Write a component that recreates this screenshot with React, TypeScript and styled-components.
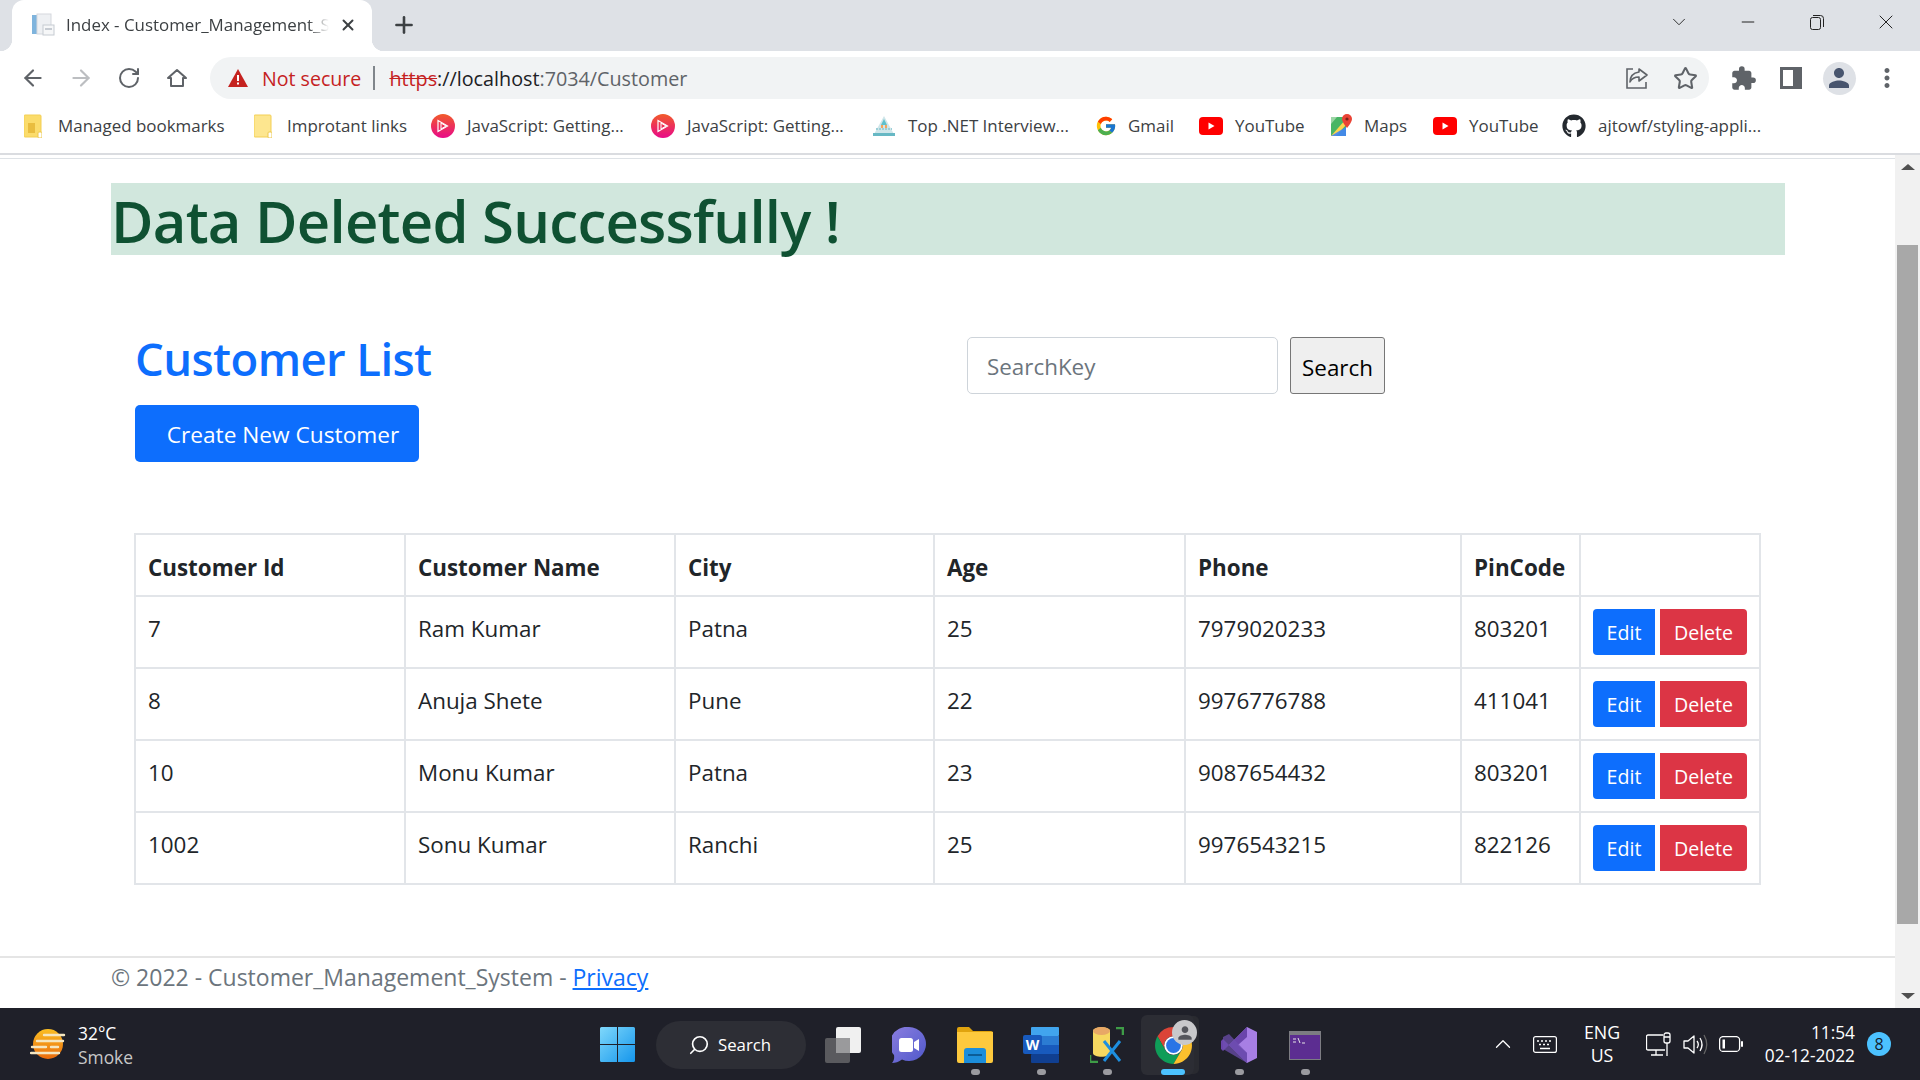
import React from "react";
import styled, { createGlobalStyle } from "styled-components";
import { ArrowLeft, ArrowRight, RotateCw, Star, X, Plus, ChevronDown, Minus, ChevronUp, Search as SearchIcon } from "lucide-react";
import { MdExtension, MdMoreVert, MdPerson } from "react-icons/md";
import { FaGithub } from "react-icons/fa";
import { FcGoogle } from "react-icons/fc";

const FONT = `"Open Sans", "Noto Sans", sans-serif`;

const Global = createGlobalStyle`
  html, body { margin: 0; padding: 0; background: #fff; overflow: hidden; }
  * { box-sizing: border-box; }
  body { font-family: ${FONT}; }
`;

const Screen = styled.div`
  width: 1920px; height: 1080px; display: flex; flex-direction: column; overflow: hidden; background: #fff;
`;

/* ---------- tab strip ---------- */
const TabStrip = styled.div`
  height: 51px; flex: none; background: #dee1e6; display: flex; align-items: flex-end; padding-left: 12px; position: relative;
`;
const Tab = styled.div`
  width: 360px; height: 51px; background: #fff; border-radius: 12px 12px 0 0; display: flex; align-items: center;
  padding: 0 0 1px 19px; position: relative;
  &::before, &::after { content: ""; position: absolute; bottom: 0; width: 12px; height: 12px; }
  &::before { left: -12px; background: radial-gradient(circle at 0 0, #dee1e6 12px, #fff 12.5px); }
  &::after { right: -12px; background: radial-gradient(circle at 100% 0, #dee1e6 12px, #fff 12.5px); }
`;
const TabTitle = styled.span`
  margin-left: 11px; width: 263px; font-size: 16.9px; line-height: 24px; color: #3c4043; white-space: nowrap; overflow: hidden;
  mask-image: linear-gradient(90deg, #000 92%, transparent);
`;
const TabClose = styled.span`
  margin-left: 10px; display: flex; color: #3c4043;
`;
const NewTab = styled.span`
  display: flex; margin: 0 0 2px 19px; align-self: center; color: #3c4043;
`;
const WinControls = styled.div`
  margin-left: auto; align-self: flex-start; height: 44px; display: flex; color: #222; 
`;
const WinBtn = styled.span<{ $w: number }>`
  width: ${p => p.$w}px; height: 44px; display: flex; align-items: center; justify-content: center;
`;

/* ---------- toolbar ---------- */
const Toolbar = styled.div`
  height: 48px; flex: none; background: #fff; display: flex; align-items: flex-start; padding: 6px 0 0 9px; position: relative;
`;
const NavBtn = styled.span<{ $c?: string }>`
  width: 48px; height: 42px; flex: none; display: flex; align-items: center; justify-content: center; color: ${p => p.$c ?? "#5f6368"};
`;
const Omnibox = styled.div`
  width: 1499px; height: 42px; flex: none; margin: 0 10px 0 9px; border-radius: 21px; background: #f1f3f4; display: flex; align-items: center; padding-left: 18px;
`;
const NotSecure = styled.span`
  margin: 2px 0 0 14px; font-size: 19.6px; line-height: 26px; color: #c5221f; white-space: nowrap;
`;
const OmniSep = styled.span`
  width: 2px; height: 24px; background: #80868b; margin: 0 14px 0 12px;
`;
const Url = styled.span`
  margin-top: 2px; font-size: 19.75px; line-height: 26px; color: #5f6368; white-space: nowrap; flex: 1;
`;
const UrlScheme = styled.span`
  color: #c5221f; text-decoration: line-through;
`;
const UrlHost = styled.span`
  color: #202124;
`;
const OmniIcon = styled.span`
  width: 48px; display: flex; justify-content: center; flex: none; color: #5f6368;
`;
const Avatar = styled.span`
  width: 33px; height: 33px; border-radius: 50%; background: #dee1e6; display: flex; align-items: center; justify-content: center; color: #48556e;
`;

/* ---------- bookmarks ---------- */
const Bookmarks = styled.div`
  height: 54px; flex: none; background: #fff; display: flex; align-items: center; padding-left: 24px; border-bottom: 0;
`;
const Bookmark = styled.div<{ $w: number; $gap: number }>`
  width: ${p => p.$w}px; flex: none; height: 30px; display: flex; align-items: center; white-space: nowrap;
  & > span { margin-left: ${p => p.$gap}px; }
`;
const BookmarkIcon = styled.div`
  width: 24px; height: 24px; display: flex; align-items: center; justify-content: flex-start; flex: none;
`;
const BookmarkText = styled.span`
  font-size: 16.95px; line-height: 24px; color: #3c4043;
`;
const ChromeEdge = styled.div`
  height: 2px; flex: none; background: #dadce0;
`;

/* ---------- page ---------- */
const Viewport = styled.div`
  flex: 1; min-height: 0; display: flex;
`;
const Page = styled.div`
  flex: 1; min-width: 0; display: flex; flex-direction: column; background: #fff;
`;
const NavStub = styled.div`
  height: 4px; flex: none; border-bottom: 1px solid #dee2e6;
`;
const Alert = styled.div`
  margin: 24px 0 0 111px; width: 1674px; height: 72px; background: #d1e7dd; color: #0f5132; font-size: 58px; line-height: 76px; font-weight: 600; letter-spacing: -0.75px; white-space: nowrap;
`;
const Main = styled.div`
  margin-left: 135px; width: 1626px; padding-top: 74px;
`;
const HeadRow = styled.div`
  display: flex; align-items: flex-start; height: 204px;
`;
const TitleCol = styled.div`
  width: 832px; flex: none;
`;
const Title = styled.h2`
  margin: 0; font-size: 45.5px; line-height: 58px; font-weight: 600; letter-spacing: -0.6px; color: #0d6efd; white-space: nowrap;
`;
const CreateBtn = styled.button`
  margin-top: 18px; width: 284px; height: 57px; background: #0d6efd; color: #fff; border: 0; border-radius: 5px; font-family: ${FONT}; font-size: 22.700px; padding: 2px 0 0 12px; display: block;
`;
const SearchForm = styled.form`
  display: flex; gap: 12px; margin: 8px 0 0;
`;
const SearchInput = styled.input`
  width: 311px; height: 57px; border: 1px solid #ced4da; border-radius: 5px; padding: 2px 19px 0; font-family: ${FONT}; font-size: 22.4px; color: #212529; outline: 0;
  &::placeholder { color: #6c757d; opacity: 1; }
`;
const SearchBtn = styled.button`
  width: 95px; height: 57px; border: 1px solid #767676; border-radius: 3px; background: #efefef; color: #000; font-family: ${FONT}; font-size: 22.4px; padding: 3px 0 0;
`;
const Table = styled.table`
  margin: 0 0 0 -1px; width: 1626px; table-layout: fixed; border-collapse: collapse; color: #212529; font-size: 22.4px;
  th, td { border: 2px solid #e2e5e9; padding: 14px 12px 10px; line-height: 36px; text-align: left; vertical-align: top; }
  th { font-weight: 700; padding-top: 15px; padding-bottom: 9px; }
  thead tr { height: 62px; }
  tbody tr { height: 72px; }
`;
const ActionCell = styled.td`
  && { padding: 12px 0 0 12px; }
`;
const Actions = styled.div`
  display: flex; gap: 5px;
`;
const RowBtn = styled.button<{ $danger?: boolean }>`
  height: 46px; width: ${p => (p.$danger ? 87 : 62)}px; border: 0; color: #fff; font-family: ${FONT}; font-size: 19.6px; padding: 0;
  background: ${p => (p.$danger ? "#dc3545" : "#0d6efd")};
  border-radius: ${p => (p.$danger ? "0 4px 4px 0" : "4px 0 0 4px")};
`;
const Footer = styled.footer`
  margin-top: 71px; border-top: 2px solid #e5e5e5; padding-left: 111px; height: 51px; color: #6c757d; font-size: 23px; line-height: 36px; padding-top: 1px; white-space: nowrap;
`;
const FooterLink = styled.a`
  color: #0d6efd; text-decoration: underline;
`;

const Scrollbar = styled.div`
  width: 25px; flex: none; background: #f1f1f1; display: flex; flex-direction: column; align-items: center; padding-top: 9px;
`;
const ScrollThumb = styled.div`
  width: 21px; height: 679px; margin-top: 75px; background: #a8a8a8; flex: none;
`;
const ArrowUp = styled.div`
  width: 0; height: 0; flex: none; border: 7px solid transparent; border-top: 0; border-bottom: 6px solid #505050; 
`;
const ArrowDown = styled.div`
  width: 0; height: 0; flex: none; margin-top: 69px; border: 7px solid transparent; border-bottom: 0; border-top: 6px solid #505050;
`;

/* ---------- taskbar ---------- */
const Taskbar = styled.div`
  height: 72px; flex: none; background: #1f2029; display: flex; align-items: stretch; color: #fff;
`;
const Weather = styled.div`
  width: 600px; flex: none; display: flex; align-items: center; padding-left: 30px;
`;
const WeatherText = styled.div`
  margin-left: 12px; font-size: 17.400px; line-height: 24px; margin-top: 1px;
`;
const WeatherSub = styled.div`
  color: #c8c8c8;
`;
const Center = styled.div`
  display: flex; align-items: center;
`;
const SearchPill = styled.div`
  width: 150px; height: 48px; margin: 1px 4px 0 21px; border-radius: 24px; background: #2d2e35; display: flex; align-items: center; padding-left: 32px; gap: 8px; font-size: 16.8px;
`;
const AppSlot = styled.div<{ $active?: boolean; $running?: boolean }>`
  width: 66px; height: 72px; position: relative; display: flex; align-items: center; justify-content: center; padding-top: 2px;
  ${p => p.$active ? `&::before { content: ""; position: absolute; left: 1px; top: 7px; width: 53px; height: 60px; border-radius: 6px; background: #2c2d34; box-shadow: 6px 0 0 -1px #292a30; }` : ""}
  &::after {
    content: ""; position: absolute; bottom: 5px; left: 50%; height: 6px; border-radius: 3px;
    width: ${p => (p.$active ? 24 : 9)}px; margin-left: ${p => (p.$active ? -12 : -4)}px;
    background: ${p => (p.$active ? "#4cc2ff" : p.$running ? "#9b9ba0" : "transparent")};
  }
  & > svg { position: relative; }
`;
const ProfileBadge = styled.span`
  position: absolute; top: 12px; left: 32px; width: 25px; height: 25px; border-radius: 50%; background: #c9c9cb; color: #55565c; display: flex; align-items: center; justify-content: center;
`;
const Tray = styled.div`
  margin-left: auto; display: flex; align-items: center; padding-right: 29px;
`;
const TraySlot = styled.span<{ $w: number }>`
  width: ${p => p.$w}px; display: flex; justify-content: center; flex: none;
`;
const Lang = styled.div`
  width: 76px; text-align: center; font-size: 17.800px; line-height: 23px; 
`;
const Clock = styled.div`
  width: 106px; text-align: right; font-size: 17.300px; line-height: 23px; white-space: nowrap;
`;
const Badge = styled.span`
  width: 24px; height: 24px; margin-left: 12px; border-radius: 50%; background: #4cc2ff; color: #14202c; font-size: 16px; display: flex; align-items: center; justify-content: center;
`;

/* ---------- drawings ---------- */
const Favicon = () => (
  <svg width="24" height="24" viewBox="0 0 24 24">
    <rect x="1" y="2" width="5" height="19" fill="#7fb4dd" />
    <rect x="6" y="1" width="14" height="20" fill="#eef0f3" stroke="#d5d8dd" />
    <rect x="12" y="12" width="11" height="10" fill="#f6f7f8" stroke="#c6cbd2" />
    <rect x="14" y="15" width="7" height="2" fill="#c6cbd2" />
  </svg>
);
const Warning = () => (
  <svg width="20" height="18" viewBox="0 0 20 18"><path d="M10 0 20 18H0Z" fill="#c5221f" /><rect x="9" y="6" width="2" height="6" fill="#fff" /><rect x="9" y="13.5" width="2" height="2" fill="#fff" /></svg>
);
const Home = () => (
  <svg width="24" height="24" viewBox="0 0 24 24" fill="none" stroke="#5f6368" strokeWidth="2"><path d="M3 12 12 4l9 8h-3v8H6v-8Z" strokeLinejoin="round" /></svg>
);
const Share = () => (
  <svg width="24" height="24" viewBox="0 0 24 24" fill="none" stroke="#5f6368" strokeWidth="1.6"><path d="M8 3H2v19h19v-6" /><path d="M14 3l8 6-8 6v-4c-4 0-7 1-9 5 0-6 3-9 9-10Z" strokeLinejoin="round" /></svg>
);
const Panel = () => (
  <svg width="22" height="22" viewBox="0 0 22 22"><path fillRule="evenodd" d="M0 0h22v22H0Zm3 3v16h10V3Z" fill="#5f6368" /></svg>
);
const RestoreIcon = () => (
  <svg width="16" height="16" viewBox="0 0 16 16" fill="none" stroke="#222" strokeWidth="1"><rect x="1.5" y="3.5" width="10" height="12" rx="2" /><path d="M4 1.5h7.5a3 3 0 0 1 3 3V13" /></svg>
);
const FolderBm = ({ managed }: { managed?: boolean }) => (
  <svg width="18" height="24" viewBox="0 0 18 24">
    <path d="M0 2a1 1 0 0 1 1-1h15a1 1 0 0 1 1 1v21H1a1 1 0 0 1-1-1Z" fill={managed ? "#fbdc6b" : "#fde68f"} stroke="#f3cf55" />
    {managed && <rect x="4" y="9" width="7" height="10" fill="#e9bd3f" />}
    <rect x="14" y="18" width="4" height="6" rx="1" fill="#fff" stroke="#edc84c" />
  </svg>
);
const Pluralsight = () => (
  <svg width="24" height="24" viewBox="0 0 24 24">
    <defs><linearGradient id="ps" x1="0.5" y1="0" x2="0.5" y2="1"><stop offset="0" stopColor="#f15b2a" /><stop offset="1" stopColor="#e80a89" /></linearGradient></defs>
    <circle cx="12" cy="12" r="12" fill="url(#ps)" />
    <path d="M7 6.5v11L16.5 12Z" fill="none" stroke="#fff" strokeWidth="1.2" /><path d="M10 9v6l5-3Z" fill="none" stroke="#fff" strokeWidth="1" />
  </svg>
);
const NetIcon = () => (
  <svg width="24" height="24" viewBox="0 0 24 24">
    <path d="M12 2 23 22H1Z" fill="#cfe6ea" />
    <path d="M12 5 15 11H9Z" fill="#5ec0cc" />
    <rect x="9" y="11" width="2" height="3" fill="#f2a55d" /><rect x="13" y="11" width="2" height="3" fill="#f2a55d" />
    <path d="M1 19h22v3H1Z" fill="#67b8c4" />
    <path d="M4 15h16" stroke="#9ccfd7" strokeWidth="2" strokeDasharray="2 1" />
  </svg>
);
const YouTube = () => (
  <svg width="24" height="18" viewBox="0 0 24 18"><rect width="24" height="18" rx="4" fill="#f00" /><path d="M9.5 5.5v7l6-3.5Z" fill="#fff" /></svg>
);
const Maps = () => (
  <svg width="22" height="24" viewBox="0 0 22 24">
    <path d="M1 3h15v19H1Z" fill="#48b564" />
    <path d="M1 22 16 5v6L6 22Z" fill="#fcd34d" />
    <path d="M1 22h15v-9Z" fill="#4285f4" opacity=".9" />
    <path d="M1 3h6L1 10Z" fill="#9cd5a5" />
    <path d="M17 0a5 5 0 0 1 5 5c0 3-5 9-5 9s-5-6-5-9a5 5 0 0 1 5-5Z" fill="#ea4335" />
    <circle cx="17" cy="5" r="1.6" fill="#7d2118" />
  </svg>
);
const WeatherIcon = () => (
  <svg width="36" height="30" viewBox="0 0 36 30">
    <defs><linearGradient id="sun" x1="0" y1="0" x2="0" y2="1"><stop offset="0" stopColor="#fbbf24" /><stop offset="1" stopColor="#ea6a0c" /></linearGradient></defs>
    <circle cx="18" cy="15" r="15" fill="url(#sun)" />
    <g stroke="#f5e6c0" strokeWidth="2.4" strokeLinecap="round">
      <path d="M14 6h20M7 12h26M2 18h14M21 18h7M1 24h28" />
    </g>
  </svg>
);
const Win11 = () => (
  <svg width="35" height="35" viewBox="0 0 35 35">
    <defs><linearGradient id="w1" x1="0" y1="0" x2="1" y2="1"><stop offset="0" stopColor="#7fd8fb" /><stop offset="1" stopColor="#1596ec" /></linearGradient></defs>
    <path d="M0 1.5A1.5 1.5 0 0 1 1.5 0H17v17H0ZM18 0h15.5A1.5 1.5 0 0 1 35 1.5V17H18ZM0 18h17v17H1.5A1.5 1.5 0 0 1 0 33.500ZM18 18h17v15.500A1.500 1.500 0 0 1 33.500 35H18Z" fill="url(#w1)" />
  </svg>
);
const CubeApp = () => (
  <svg width="36" height="36" viewBox="0 0 36 36">
    <rect x="0" y="11" width="25" height="25" rx="2" fill="#5a5a5e" />
    <rect x="11" y="0" width="25" height="26" rx="2" fill="#f0f0f0" />
    <rect x="11" y="11" width="14" height="15" fill="#9a9a9c" />
  </svg>
);
const Teams = () => (
  <svg width="34" height="36" viewBox="0 0 34 36">
    <defs><linearGradient id="tm" x1="0" y1="0" x2="1" y2="1"><stop offset="0" stopColor="#8b7ee0" /><stop offset="1" stopColor="#4f58ca" /></linearGradient></defs>
    <path d="M17 0a17 17 0 1 1-7 32.500C7 35 3 36 0 36c2-2 2.500-5 2-8A17 17 0 0 1 17 0Z" fill="url(#tm)" />
    <rect x="7" y="11" width="14" height="14" rx="2.500" fill="#fff" />
    <path d="M22 15l5-3v12l-5-3Z" fill="#fff" />
  </svg>
);
const FolderApp = () => (
  <svg width="36" height="36" viewBox="0 0 36 36">
    <path d="M0 2a2 2 0 0 1 2-2h10l4 4h18a2 2 0 0 1 2 2v6H0Z" fill="#e0a30e" />
    <path d="M0 5h36v29a2 2 0 0 1-2 2H2a2 2 0 0 1-2-2Z" fill="#fdc93d" />
    <path d="M7 36V24a3 3 0 0 1 3-3h16a3 3 0 0 1 3 3v12Z" fill="#1c8edb" />
    <rect x="11" y="27" width="14" height="2" fill="#0b5d98" />
  </svg>
);
const Word = () => (
  <svg width="36" height="36" viewBox="0 0 36 36">
    <rect x="8" y="0" width="28" height="9" rx="1" fill="#41a5ee" />
    <rect x="8" y="9" width="28" height="9" fill="#2b7cd3" />
    <rect x="8" y="18" width="28" height="9" fill="#185abd" />
    <rect x="8" y="27" width="28" height="9" rx="1" fill="#103f91" />
    <rect x="0" y="8" width="19" height="19" rx="2" fill="#185abd" />
    <text x="9.500" y="23" textAnchor="middle" fontSize="14" fontWeight="700" fill="#fff" fontFamily="Open Sans, sans-serif">W</text>
  </svg>
);
const DbTool = () => (
  <svg width="34" height="36" viewBox="0 0 34 36">
    <path d="M3 4c0-5 17-5 17 0v22c0 5-17 5-17 0Z" fill="#f6d860" />
    <ellipse cx="11.500" cy="4" rx="8.500" ry="4" fill="#e8a866" />
    <path d="M26 1h7v7M0 28v7h8" stroke="#3e9c47" strokeWidth="2.600" fill="none" />
    <path d="M14 34 30 14M30 34 14 14" stroke="#1d8fe0" strokeWidth="3" />
  </svg>
);
const ChromeLogo = () => (
  <svg width="37" height="37" viewBox="4 4 40 40">
    <path d="M24 4A20 20 0 0 0 6.700 14L15.300 29A10 10 0 0 1 24 14H41.300A20 20 0 0 0 24 4Z" fill="#db4437" />
    <path d="M6.700 14A20 20 0 0 0 24 44L32.700 29A10 10 0 0 1 15.300 29Z" fill="#0f9d58" />
    <path d="M41.300 14H24A10 10 0 0 1 32.700 29L24 44A20 20 0 0 0 41.300 14Z" fill="#fbc02d" />
    <circle cx="24" cy="24" r="10" fill="#fff" /><circle cx="24" cy="24" r="8" fill="#2a75e6" />
  </svg>
);
const VS = () => (
  <svg width="36" height="36" viewBox="0 0 36 36">
    <path d="M26 0 36 5v26l-10 5L8 18Z" fill="#a77fe4" />
    <path d="M26 0 8 18 2 12l-2 2v8l2 2 6-6 18 18V26l-9-8 9-8Z" fill="#6a45ab" />
    <path d="M2 10l6-3 18 19v10L2 22Z" fill="#6f50b2" opacity=".7" />
  </svg>
);
const Terminal = () => (
  <svg width="32" height="29" viewBox="0 0 32 29">
    <rect width="32" height="29" fill="#7c7c82" />
    <rect x="1" y="4" width="30" height="24" fill="#5c2d91" />
    <path d="M4 8h3M4 11h3M9 7l2 5M13 12h3" stroke="#e6e6e6" strokeWidth="1" fill="none" />
  </svg>
);
const Keyboard = () => (
  <svg width="24" height="17" viewBox="0 0 24 17" fill="none" stroke="#fff" strokeWidth="1.200"><rect x=".6" y=".6" width="22.800" height="15.800" rx="2" /><path d="M4 5h2M8 5h2M12 5h2M16 5h2M6 8.500h2M10 8.500h2M14 8.500h2M7 12.500h10" strokeWidth="1.400" /></svg>
);
const Monitor = () => (
  <svg width="25" height="25" viewBox="0 0 25 25" fill="none" stroke="#fff" strokeWidth="1.300"><path d="M17 3H2a1.500 1.500 0 0 0-1.500 1.500v12A1.500 1.500 0 0 0 2 18h17" /><path d="M5 23h12M10 18v5" /><rect x="18" y="1" width="6" height="10" rx="2" /><path d="M21 11v13M18 5h6" /></svg>
);
const Speaker = () => (
  <svg width="25" height="21" viewBox="0 0 25 21" fill="none" stroke="#fff" strokeWidth="1.300"><path d="M1 7h4l6-5v17l-6-5H1Z" strokeLinejoin="round" /><path d="M14 7c1.500 2 1.500 5 0 7M17 4c2.500 4 2.500 9 0 13" /><path d="M21 1c3.500 6 3.500 13 0 19" stroke="#666" /></svg>
);
const Battery = () => (
  <svg width="24" height="16" viewBox="0 0 24 16" fill="none" stroke="#fff" strokeWidth="1.300"><rect x=".6" y=".6" width="20" height="14.800" rx="3.500" /><rect x="3.500" y="3.500" width="2.500" height="9" fill="#fff" stroke="none" /><path d="M22 6h1.500v4H22" fill="#fff" /></svg>
);

/* ---------- data ---------- */
const bookmarks: { w: number; gap: number; icon: React.ReactNode; label: string }[] = [
  { w: 230, gap: 10, icon: <FolderBm managed />, label: "Managed bookmarks" },
  { w: 177, gap: 9, icon: <FolderBm />, label: "Improtant links" },
  { w: 220, gap: 12, icon: <Pluralsight />, label: "JavaScript: Getting..." },
  { w: 221, gap: 12, icon: <Pluralsight />, label: "JavaScript: Getting..." },
  { w: 223, gap: 12, icon: <NetIcon />, label: "Top .NET Interview..." },
  { w: 104, gap: 9, icon: <FcGoogle size={22} />, label: "Gmail" },
  { w: 131, gap: 12, icon: <YouTube />, label: "YouTube" },
  { w: 103, gap: 10, icon: <Maps />, label: "Maps" },
  { w: 129, gap: 12, icon: <YouTube />, label: "YouTube" },
  { w: 200, gap: 12, icon: <FaGithub size={24} color="#24292f" />, label: "ajtowf/styling-appli..." },
];
const customers = [
  ["7", "Ram Kumar", "Patna", "25", "7979020233", "803201"],
  ["8", "Anuja Shete", "Pune", "22", "9976776788", "411041"],
  ["10", "Monu Kumar", "Patna", "23", "9087654432", "803201"],
  ["1002", "Sonu Kumar", "Ranchi", "25", "9976543215", "822126"],
];
const columns = [
  { label: "Customer Id", w: 270 }, { label: "Customer Name", w: 270 }, { label: "City", w: 259 },
  { label: "Age", w: 251 }, { label: "Phone", w: 276 }, { label: "PinCode", w: 119 }, { label: "", w: 180 },
];
const apps: { icon: React.ReactNode; running?: boolean; active?: boolean; badge?: boolean }[] = [
  { icon: <CubeApp /> }, { icon: <Teams /> }, { icon: <FolderApp />, running: true }, { icon: <Word />, running: true },
  { icon: <DbTool />, running: true }, { icon: <ChromeLogo />, active: true, badge: true }, { icon: <VS />, running: true }, { icon: <Terminal />, running: true },
];

export default function App() {
  return (
    <Screen>
      <Global />
      <TabStrip>
        <Tab>
          <Favicon />
          <TabTitle>Index - Customer_Management_S</TabTitle>
          <TabClose><X size={18} strokeWidth={2.6} /></TabClose>
        </Tab>
        <NewTab><Plus size={26} strokeWidth={2.4} /></NewTab>
        <WinControls>
          <WinBtn $w={69}><ChevronDown size={22} strokeWidth={1} /></WinBtn>
          <WinBtn $w={69}><Minus size={20} strokeWidth={1.2} /></WinBtn>
          <WinBtn $w={69}><RestoreIcon /></WinBtn>
          <WinBtn $w={69}><X size={24} strokeWidth={1} /></WinBtn>
        </WinControls>
      </TabStrip>
      <Toolbar>
        <NavBtn><ArrowLeft size={26} strokeWidth={2} /></NavBtn>
        <NavBtn $c="#bcbec1"><ArrowRight size={26} strokeWidth={2} /></NavBtn>
        <NavBtn><RotateCw size={24} strokeWidth={2} /></NavBtn>
        <NavBtn><Home /></NavBtn>
        <Omnibox>
          <Warning />
          <NotSecure>Not secure</NotSecure>
          <OmniSep />
          <Url><UrlScheme>https</UrlScheme><UrlHost>://localhost</UrlHost>:7034/Customer</Url>
          <OmniIcon><Share /></OmniIcon>
          <OmniIcon><Star size={25} strokeWidth={2} /></OmniIcon>
        </Omnibox>
        <NavBtn><MdExtension size={27} /></NavBtn>
        <NavBtn><Panel /></NavBtn>
        <NavBtn><Avatar><MdPerson size={30} /></Avatar></NavBtn>
        <NavBtn><MdMoreVert size={30} /></NavBtn>
      </Toolbar>
      <Bookmarks>
        {bookmarks.map((b, i) => (
          <Bookmark key={i} $w={b.w} $gap={b.gap}>
            <BookmarkIcon>{b.icon}</BookmarkIcon>
            <BookmarkText>{b.label}</BookmarkText>
          </Bookmark>
        ))}
      </Bookmarks>
      <ChromeEdge />
      <Viewport>
        <Page>
          <NavStub />
          <Alert>Data Deleted Successfully !</Alert>
          <Main>
            <HeadRow>
              <TitleCol>
                <Title>Customer List</Title>
                <CreateBtn type="button">Create New Customer</CreateBtn>
              </TitleCol>
              <SearchForm>
                <SearchInput placeholder="SearchKey" />
                <SearchBtn type="button">Search</SearchBtn>
              </SearchForm>
            </HeadRow>
            <Table>
              <colgroup>{columns.map((c, i) => <col key={i} width={c.w} />)}</colgroup>
              <thead><tr>{columns.map((c, i) => <th key={i}>{c.label}</th>)}</tr></thead>
              <tbody>
                {customers.map(row => (
                  <tr key={row[0]}>
                    {row.map((v, i) => <td key={i}>{v}</td>)}
                    <ActionCell>
                      <Actions><RowBtn>Edit</RowBtn><RowBtn $danger>Delete</RowBtn></Actions>
                    </ActionCell>
                  </tr>
                ))}
              </tbody>
            </Table>
          </Main>
          <Footer>© 2022 - Customer_Management_System - <FooterLink href="#">Privacy</FooterLink></Footer>
        </Page>
        <Scrollbar>
          <ArrowUp />
          <ScrollThumb />
          <ArrowDown />
        </Scrollbar>
      </Viewport>
      <Taskbar>
        <Weather>
          <WeatherIcon />
          <WeatherText>32°C<WeatherSub>Smoke</WeatherSub></WeatherText>
        </Weather>
        <Center>
          <Win11 />
          <SearchPill><SearchIcon size={22} strokeWidth={1.8} style={{ transform: "scaleX(-1)" }} />Search</SearchPill>
          {apps.map((a, i) => (
            <AppSlot key={i} $active={a.active} $running={a.running}>
              {a.icon}
              {a.badge && <ProfileBadge><MdPerson size={20} /></ProfileBadge>}
            </AppSlot>
          ))}
        </Center>
        <Tray>
          <TraySlot $w={46}><ChevronUp size={26} strokeWidth={1.2} /></TraySlot>
          <TraySlot $w={38}><Keyboard /></TraySlot>
          <Lang>ENG<br />US</Lang>
          <TraySlot $w={37}><Monitor /></TraySlot>
          <TraySlot $w={36}><Speaker /></TraySlot>
          <TraySlot $w={36}><Battery /></TraySlot>
          <Clock>11:54<br />02-12-2022</Clock>
          <Badge>8</Badge>
        </Tray>
      </Taskbar>
    </Screen>
  );
}
